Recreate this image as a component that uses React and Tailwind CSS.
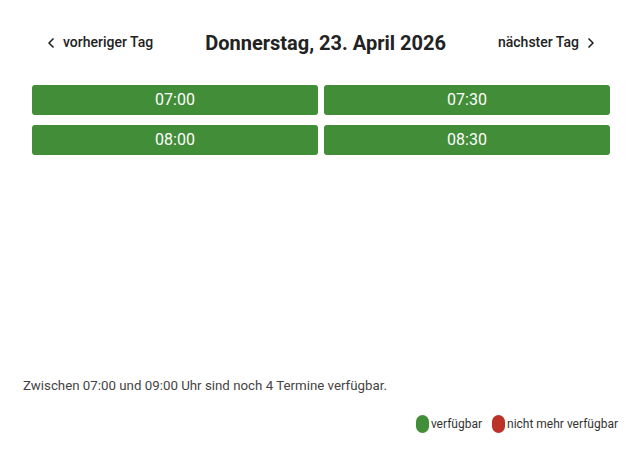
import React from "react";
import { ChevronLeft, ChevronRight } from "lucide-react";

const slots = ["07:00", "07:30", "08:00", "08:30"];

export default function App() {
  return (
    <div className="w-[640px] h-[454px] bg-white text-[#222] flex flex-col" style={{ fontFamily: "Roboto, 'Liberation Sans', sans-serif" }}>
      <div className="flex items-center justify-between pl-[43px] pr-[41px] pt-[29px] h-[56px]">
        <button className="flex items-center gap-[4px] text-[14px] font-medium text-[#222]">
          <ChevronLeft className="w-[16px] h-[16px]" strokeWidth={2.5} />
          vorheriger Tag
        </button>
        <h1 className="text-[20px] font-bold text-[#222]">Donnerstag, 23. April 2026</h1>
        <button className="flex items-center gap-[4px] text-[14px] font-medium text-[#222]">
          nächster Tag
          <ChevronRight className="w-[16px] h-[16px]" strokeWidth={2.5} />
        </button>
      </div>

      <div className="grid grid-cols-2 gap-x-[6px] gap-y-[10px] pl-[32px] pr-[30px] mt-[29px]">
        {slots.map((s) => (
          <button key={s} className="h-[30px] rounded-[3px] bg-[#428d37] text-white text-[16px] flex items-center justify-center">
            {s}
          </button>
        ))}
      </div>

      <div className="flex-1" />

      <p className="pl-[23px] text-[13.3px] text-[#444] mb-[19px]">
        Zwischen 07:00 und 09:00 Uhr sind noch 4 Termine verfügbar.
      </p>

      <div className="flex justify-end items-center pr-[22px] mb-[21px] text-[12px] text-[#333]">
        <span className="w-[13px] h-[18px] rounded-full bg-[#428d37] mr-[2px]" />
        <span className="mr-[10px]">verfügbar</span>
        <span className="w-[13px] h-[18px] rounded-full bg-[#bb3328] mr-[2px]" />
        <span>nicht mehr verfügbar</span>
      </div>
    </div>
  );
}
